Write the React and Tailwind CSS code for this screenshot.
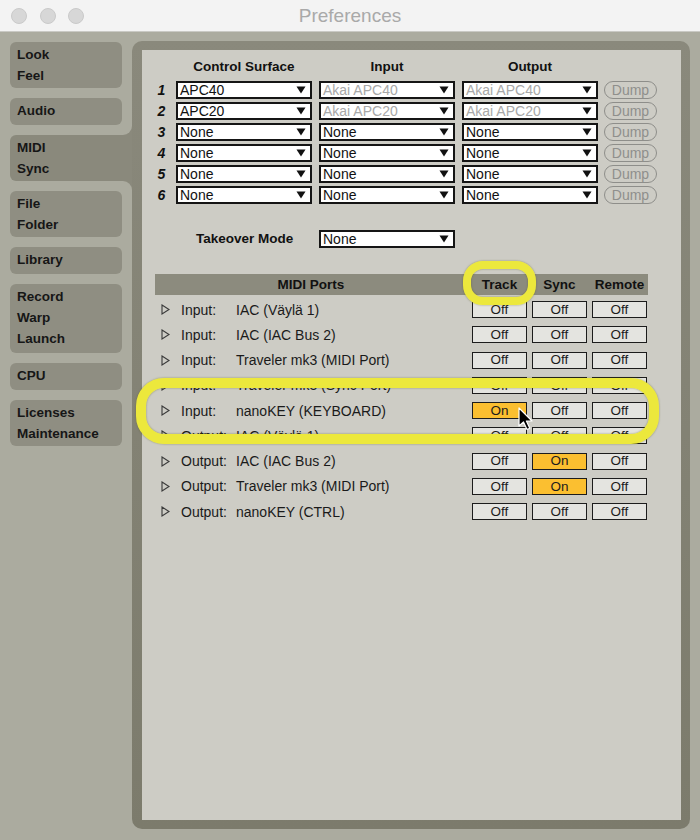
import React from "react";

const Arrow = () => (
  <svg width="10" height="8" viewBox="0 0 10 8" className="shrink-0">
    <polygon points="0.5,0.5 9.5,0.5 5,7.5" fill="#111" />
  </svg>
);

const Dropdown = ({ value, dim, w = "w-[136px]", cls = "" }) => (
  <div className={`${w} ${cls} h-[18px] border-2 border-[#151515] bg-white flex items-center pl-[2px] pr-[4px]`}>
    <span className={`flex-1 text-[14px] leading-none whitespace-nowrap ${dim ? "text-[#a8a8a8]" : "text-[#111]"}`}>{value}</span>
    <Arrow />
  </div>
);

const Tab = ({ lines, h, selected }) => (
  <div
    className={`relative ${h} ${selected ? "w-[122px] rounded-l-[6px] bg-[#8a897c]" : "w-[112px] rounded-[6px] bg-[#8f8e82]"} pl-[7px] pt-[2px] font-bold text-[13.5px] leading-[21px] text-[#161616]`}
  >
    {lines.map((l) => (
      <div key={l}>{l}</div>
    ))}
    {selected && (
      <>
        <div className="absolute right-0 bottom-full w-[10px] h-[10px] bg-[#8a897c]">
          <div className="w-full h-full bg-[#abab9f] rounded-br-[9px]" />
        </div>
        <div className="absolute right-0 top-full w-[10px] h-[10px] bg-[#8a897c]">
          <div className="w-full h-full bg-[#abab9f] rounded-tr-[9px]" />
        </div>
      </>
    )}
  </div>
);

const surfaces = [
  ["APC40", "Akai APC40", "Akai APC40", true],
  ["APC20", "Akai APC20", "Akai APC20", true],
  ["None", "None", "None", false],
  ["None", "None", "None", false],
  ["None", "None", "None", false],
  ["None", "None", "None", false],
];

const ports = [
  ["Input:", "IAC (Väylä 1)", [0, 0, 0]],
  ["Input:", "IAC (IAC Bus 2)", [0, 0, 0]],
  ["Input:", "Traveler mk3 (MIDI Port)", [0, 0, 0]],
  ["Input:", "Traveler mk3 (Sync Port)", [0, 0, 0]],
  ["Input:", "nanoKEY (KEYBOARD)", [1, 0, 0]],
  ["Output:", "IAC (Väylä 1)", [0, 0, 0]],
  ["Output:", "IAC (IAC Bus 2)", [0, 1, 0]],
  ["Output:", "Traveler mk3 (MIDI Port)", [0, 1, 0]],
  ["Output:", "nanoKEY (CTRL)", [0, 0, 0]],
];

const Toggle = ({ on }) => (
  <div
    className={`w-[55px] h-[17px] border-[1.5px] border-[#1c1c1c] flex items-center justify-center text-[13.5px] leading-none text-[#1c1c1c] ${on ? "bg-[#fbbf30]" : "bg-[#e4e4e0]"}`}
  >
    {on ? "On" : "Off"}
  </div>
);

export default function App() {
  return (
    <div className="relative w-[700px] h-[840px] overflow-hidden bg-[#abab9f] font-['Liberation_Sans',Arial,sans-serif] text-[#111]">
      {/* title bar */}
      <div className="h-[32px] bg-[#f3f3f3] border-b border-[#c9c9c4] grid grid-cols-[1fr_auto_1fr] items-center">
        <div className="flex items-center gap-[12.5px] pl-[11px]">
          <div className="w-[16px] h-[16px] rounded-full bg-[#d7d7d7] border border-[#cacaca]" />
          <div className="w-[16px] h-[16px] rounded-full bg-[#d7d7d7] border border-[#cacaca]" />
          <div className="w-[16px] h-[16px] rounded-full bg-[#d7d7d7] border border-[#cacaca]" />
        </div>
        <div className="text-[19px] text-[#a9a9a9] leading-none pb-[1px]">Preferences</div>
        <div />
      </div>

      <div className="flex pt-[9px]">
        {/* tabs */}
        <div className="ml-[10px] w-[112px] pt-[1px] flex flex-col gap-[10px]">
          <Tab lines={["Look", "Feel"]} h="h-[46px]" />
          <Tab lines={["Audio"]} h="h-[27px]" />
          <Tab lines={["MIDI", "Sync"]} h="h-[46px]" selected />
          <Tab lines={["File", "Folder"]} h="h-[46px]" />
          <Tab lines={["Library"]} h="h-[27px]" />
          <Tab lines={["Record", "Warp", "Launch"]} h="h-[69px]" />
          <Tab lines={["CPU"]} h="h-[27px]" />
          <Tab lines={["Licenses", "Maintenance"]} h="h-[46px]" />
        </div>

        {/* frame */}
        <div className="ml-[10px] w-[558px] h-[788px] rounded-[10px] bg-linear-to-b from-[#8a897c] to-[#7c7b6c] pt-[9px] pl-[10px] pr-[9px] pb-[9px]">
          <div className="h-full bg-[#cdccc5] pl-[11px] pt-[9px]">
            {/* control surface header */}
            <div className="flex h-[16px] items-center font-bold text-[13.5px] leading-[16px]">
              <div className="w-[17px]" />
              <div className="ml-[6px] w-[136px] text-center">Control Surface</div>
              <div className="ml-[7px] w-[136px] text-center">Input</div>
              <div className="ml-[7px] w-[136px] text-center">Output</div>
            </div>
            <div className="mt-[6px] flex flex-col gap-[3px]">
              {surfaces.map(([cs, inp, out, dim], i) => (
                <div key={i} className="flex items-center h-[18px]">
                  <div className="w-[17px] text-center font-bold italic text-[14px] leading-none">{i + 1}</div>
                  <Dropdown value={cs} cls="ml-[6px]" />
                  <Dropdown value={inp} dim={dim} cls="ml-[7px]" />
                  <Dropdown value={out} dim={dim} cls="ml-[7px]" />
                  <div className="ml-[6px] w-[53px] h-[18px] rounded-full border-[1.5px] border-[#8e8e8a] flex items-center justify-center text-[14px] leading-none text-[#8f8f8c]">
                    Dump
                  </div>
                </div>
              ))}
            </div>

            {/* takeover */}
            <div className="mt-[26px] flex items-center h-[18px]">
              <div className="ml-[43px] w-[123px] font-bold text-[13.5px] leading-none">Takeover Mode</div>
              <Dropdown value="None" />
            </div>

            {/* MIDI ports */}
            <div className="mt-[26px] ml-[2px] w-[493px]">
              <div className="h-[21px] bg-[#8c8b7e] flex items-center font-bold text-[13.5px] leading-none">
                <div className="w-[312px] text-center">MIDI Ports</div>
                <div className="ml-[5px] w-[55px] text-center">Track</div>
                <div className="ml-[5px] w-[55px] text-center">Sync</div>
                <div className="ml-[5px] w-[55px] text-center">Remote</div>
              </div>
              <div className="mt-[2px] flex flex-col">
                {ports.map(([kind, name, st], i) => (
                  <div key={i} className="h-[25.25px] flex items-center text-[14px] leading-none text-[#1a1a1a]">
                    <div className="pl-[6px] w-[26px] flex items-center">
                      <svg width="9" height="11" viewBox="0 0 9 11">
                        <polygon points="1,1 8,5.5 1,10" fill="none" stroke="#3a3a3a" strokeWidth="1.1" />
                      </svg>
                    </div>
                    <div className="w-[55px]">{kind}</div>
                    <div className="w-[231px] whitespace-nowrap">{name}</div>
                    <div className="ml-[5px] flex gap-[5px]">
                      {st.map((s, j) => (
                        <Toggle key={j} on={s === 1} />
                      ))}
                    </div>
                  </div>
                ))}
              </div>
            </div>
          </div>
        </div>
      </div>

      {/* annotation rings */}
      <div className="absolute left-[463px] top-[261px] w-[73px] h-[44px] rounded-[20px] border-[8px] border-[#ece83c] shadow-[0_0_2px_rgba(90,90,20,0.6),inset_0_0_2px_rgba(90,90,20,0.6)]" />
      <div className="absolute left-[136px] top-[378px] w-[523px] h-[66px] rounded-[28px] border-[10px] border-[#ece83c] shadow-[0_0_2px_rgba(90,90,20,0.6),inset_0_0_2px_rgba(90,90,20,0.6)]" />

      {/* mouse cursor */}
      <svg className="absolute left-[518px] top-[407px]" width="15" height="25" viewBox="0 0 15 25">
        <path d="M1 1 L1 19 L5.5 15 L9 22.5 L11.8 21.3 L8.4 14 L14 14 Z" fill="#000" stroke="#fff" strokeWidth="1.2" strokeLinejoin="round" />
      </svg>
    </div>
  );
}
